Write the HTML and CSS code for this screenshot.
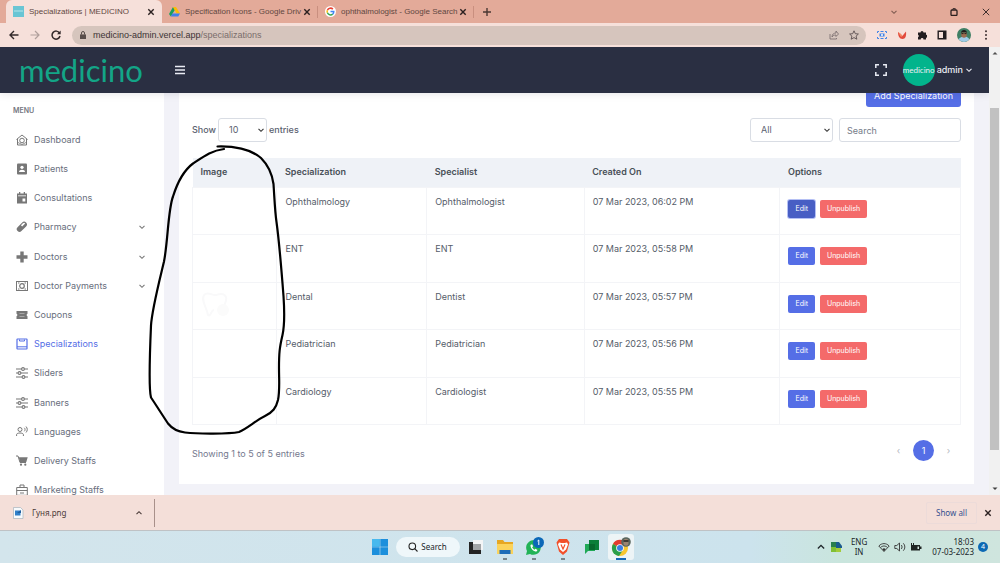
FILE: index.html
```html
<!DOCTYPE html>
<html lang="en">
<head>
<meta charset="utf-8">
<title>Specializations | MEDICINO</title>
<link rel="stylesheet" href="styles.css">
</head>
<body>
<svg class="defs" aria-hidden="true">
  <symbol id="down" viewBox="0 0 8 8"><path d="M1.5 2.8 4 5.3 6.500 2.800" fill="none" stroke="currentColor" stroke-width="1.100"/></symbol>
  <symbol id="cross" viewBox="0 0 8 8"><path d="M1.300 1.300l5.400 5.400M6.700 1.300 1.300 6.700" fill="none" stroke="currentColor" stroke-width="1.400"/></symbol>
  <symbol id="sliders" viewBox="0 0 12 12"><path d="M0 2h12M0 6h12M0 10h12" stroke="currentColor" stroke-width="1.200"/><g fill="#fff" stroke="currentColor" stroke-width="1.100"><circle cx="7" cy="2" r="1.400"/><circle cx="3.500" cy="6" r="1.400"/><circle cx="7.500" cy="10" r="1.400"/></g></symbol>
</svg>

<header class="tabs">
  <div class="tab tab-active">
    <svg class="tab-icon" viewBox="0 0 11 11"><path fill="#69c5d4" d="M0 0h11v11H0z"/><path fill="#8fd5df" d="M1 4h9v2H1z"/></svg>
    <span class="tab-title">Specializations | MEDICINO</span>
    <button class="icon-btn" aria-label="Close tab"><svg class="i8"><use href="#cross"/></svg></button>
  </div>
  <div class="tab tab-line">
    <svg class="tab-icon" viewBox="0 0 11 11"><path fill="#18a05e" d="M4 1 0 8l1.800 2.500L5.800 4z"/><path fill="#fbbc05" d="M4 1h3l4 6.500H7.500z"/><path fill="#3f80ec" d="M3.500 7.500H11l-1.700 3H1.800z"/></svg>
    <span class="tab-title">Specification Icons - Google Driv</span>
    <button class="icon-btn" aria-label="Close tab"><svg class="i8"><use href="#cross"/></svg></button>
  </div>
  <div class="tab tab-line">
    <svg class="tab-icon" viewBox="0 0 11 11"><circle cx="5.500" cy="5.500" r="5.500" fill="#fff"/><g fill="none" stroke-width="1.500"><path stroke="#ea4335" d="M2.400 4.200A3.400 3.400 0 0 1 7.900 3.100"/><path stroke="#fbbc05" d="M2.400 4.200a3.400 3.400 0 0 0 0 2.600"/><path stroke="#34a853" d="M2.400 6.800a3.400 3.400 0 0 0 5.300 1.300"/><path stroke="#4285f4" d="M5.500 5.500h3.300a3.400 3.400 0 0 1-1.100 2.600"/></g></svg>
    <span class="tab-title">ophthalmologist - Google Search</span>
    <button class="icon-btn" aria-label="Close tab"><svg class="i8"><use href="#cross"/></svg></button>
  </div>
  <button class="icon-btn new-tab" aria-label="New tab"><svg class="i8" viewBox="0 0 8 8"><path d="M4 0v8M0 4h8" stroke="#4b3833" stroke-width="1.400"/></svg></button>
  <div class="window-controls">
    <button class="icon-btn search-tabs" aria-label="Search tabs"><svg class="i8"><use href="#down"/></svg></button>
    <button class="icon-btn restore" aria-label="Restore"><svg class="i8" viewBox="0 0 8 8"><rect x="1" y="2" width="6" height="5.500" rx="1" fill="none" stroke="#2b2020" stroke-width="1.300"/><path d="M2.300 1.500C2.300.3 5.700.3 6 1.500" fill="none" stroke="#2b2020"/></svg></button>
    <button class="icon-btn" aria-label="Close"><svg class="i8" viewBox="0 0 8 8"><path d="M.8.800l6.400 6.400M7.200.8.800 7.200" stroke="#2b2020" stroke-width=".9"/></svg></button>
  </div>
</header>

<nav class="toolbar" aria-label="Browser">
  <button class="icon-btn" aria-label="Back"><svg class="i10" viewBox="0 0 10 10"><path d="M9.500 5H1M5 1 1 5l4 4" fill="none" stroke="#33292a" stroke-width="1.400"/></svg></button>
  <button class="icon-btn" aria-label="Forward"><svg class="i10" viewBox="0 0 10 10"><path d="M.5 5H9M5 1l4 4-4 4" fill="none" stroke="#b09f9b" stroke-width="1.200"/></svg></button>
  <button class="icon-btn" aria-label="Reload"><svg class="i10" viewBox="0 0 10 10"><path d="M8.500 3A4 4 0 1 0 9 6" fill="none" stroke="#33292a" stroke-width="1.500"/><path d="M9.700.5v3.800H6z" fill="#33292a"/></svg></button>
  <div class="address">
    <svg class="i8" viewBox="0 0 8 8"><path d="M1 3.400h6V8H1z" fill="#594d4a"/><path d="M2.500 3.500V2a1.500 1.500 0 0 1 3 0v1.500" fill="none" stroke="#594d4a"/></svg>
    <span class="url"><b>medicino-admin.vercel.app</b>/specializations</span>
    <svg class="i10" viewBox="0 0 10 10"><path d="M1 4v5h6.500V8M3 7c0-3 2-4 4-4V1l2.500 3L7 6.500V5C5 5 4 5.500 3 7z" fill="none" stroke="#75686a" stroke-width=".8"/></svg>
    <svg class="i10" viewBox="0 0 10 10"><path d="m5 .8 1.300 2.900 3.100.3-2.300 2.100.7 3.100L5 7.600 2.200 9.200l.7-3.100L.6 4l3.100-.3z" fill="none" stroke="#5b4f50" stroke-width=".9"/></svg>
  </div>
  <div class="extensions">
    <svg class="i10" viewBox="0 0 10 10"><path d="M.5 3V1.500H2M8 1.500h1.500V3M.5 7v1.500H2M8 8.500h1.500V7M3.500 1.500h3M3.500 8.500h3" fill="none" stroke="#3f83e8"/><path d="M2.500 3.500h5v3h-5z" fill="#3f83e8"/><circle cx="5" cy="5" r="1" fill="#fff"/></svg>
    <svg class="i10" viewBox="0 0 10 10"><path d="M1 2c0 4 1.500 7 4.500 7S9.500 6 9 1.500L6.500 4.500l-1 1.500L3.500 4z" fill="#e2493b"/><path d="M1 2l3 2 1.500 2L4 7z" fill="#f38d6a"/></svg>
    <svg class="i10" viewBox="0 0 10 10"><path d="M1 2.500h2.500a1.500 1.500 0 1 1 3 0H9V5a1.400 1.400 0 1 1 0 2.500V9.500H6.500a1.400 1.400 0 0 0-2.800 0H1V7.300a1.500 1.500 0 0 0 0-2.600z" fill="#221d20"/></svg>
    <svg class="i10" viewBox="0 0 10 10"><path d="M1.200 1.200h7.600v7.600H1.200z" fill="none" stroke="#221d20" stroke-width="1.400"/><path d="M6 1h3v8H6z" fill="#221d20"/></svg>
    <svg class="i14" viewBox="0 0 14 14"><circle cx="7" cy="7" r="7" fill="#3f7f65"/><path d="M1.500 11.300a7 7 0 0 0 11 0C11 9 9 8.500 7 8.500s-4 .8-5.500 2.800z" fill="#9fcbe8"/><path d="M4.300 4.500h5.400V7a2.700 2.700 0 0 1-5.400 0z" fill="#9c6a4f"/><path d="M4 5c0-4 6-4 6 0L9 4.300H5z" fill="#201c1c"/><path d="M4.500 5.600h2M7.500 5.600h2" stroke="#222"/></svg>
    <svg class="i10" viewBox="0 0 10 10"><g fill="#3d3032"><circle cx="5" cy="1.200" r="1"/><circle cx="5" cy="5" r="1"/><circle cx="5" cy="8.800" r="1"/></g></svg>
  </div>
</nav>

<div class="viewport">
  <div class="app">
    <header class="topbar">
      <a class="logo" href="#">medicino</a>
      <button class="icon-btn" aria-label="Toggle menu"><svg class="i10" viewBox="0 0 10 10"><path d="M0 1.500h10M0 5h10M0 8.500h10" stroke="#e9ecf4" stroke-width="1.700"/></svg></button>
      <button class="icon-btn fullscreen" aria-label="Full screen"><svg class="i12" viewBox="0 0 12 12"><path d="M.8 4V.800H4M8 .8h3.200V4M11.200 8v3.200H8M4 11.200H.8V8" fill="none" stroke="#e9ecf4" stroke-width="1.500"/></svg></button>
      <button class="account"><span class="avatar">medicino</span><span>admin</span><svg class="i8"><use href="#down"/></svg></button>
    </header>

    <div class="body">
      <aside class="sidebar">
        <h2 class="menu-title">MENU</h2>
        <ul class="menu">
          <li><a href="#"><svg class="i12" viewBox="0 0 12 12"><path d="M1.500 5v6h9V5M.5 5.500 6 1l5.500 4.500" fill="none" stroke="currentColor"/><circle cx="6" cy="6.500" r="2.300" fill="none" stroke="currentColor"/><path d="M2 8.500l4 2 4-2" fill="none" stroke="currentColor" stroke-width=".8"/></svg>Dashboard</a></li>
          <li><a href="#"><svg class="i12" viewBox="0 0 12 12"><rect x="1" y=".5" width="10" height="11" rx="1" fill="currentColor"/><circle cx="6" cy="4.300" r="1.600" fill="#fff"/><path d="M3 9c0-3 6-3 6 0z" fill="#fff"/></svg>Patients</a></li>
          <li><a href="#"><svg class="i12" viewBox="0 0 12 12"><path d="M1 1.500h10v10H1zM3 0h1.300v2H3zM7.700 0H9v2H7.700z" fill="currentColor"/><path d="M2 3.800h8" stroke="#fff" stroke-width=".8"/><path d="M6.500 6.500h2.800v3H6.500z" fill="#fff"/></svg>Consultations</a></li>
          <li><a href="#"><svg class="i12" viewBox="0 0 12 12"><g transform="rotate(-45 6 6)"><rect x="0" y="3" width="12" height="5.500" rx="2.700" fill="currentColor"/><path d="M6.500 4h2.800a1.500 1.500 0 0 1 1.500 1.700H6.500z" fill="#fff"/></g></svg>Pharmacy<svg class="i8 more"><use href="#down"/></svg></a></li>
          <li><a href="#"><svg class="i12" viewBox="0 0 12 12"><path d="M4.300.5h3.400v3.800h3.800v3.400H7.700v3.800H4.300V7.700H.5V4.300h3.800z" fill="currentColor"/></svg>Doctors<svg class="i8 more"><use href="#down"/></svg></a></li>
          <li><a href="#"><svg class="i12" viewBox="0 0 12 12"><rect x=".5" y="1.500" width="11" height="9" fill="none" stroke="currentColor"/><circle cx="6" cy="6" r="2.300" fill="none" stroke="currentColor" stroke-width="1.200"/><path d="M2 3h1.500M8.500 3H10M2 9h1.500M8.500 9H10" stroke="currentColor"/></svg>Doctor Payments<svg class="i8 more"><use href="#down"/></svg></a></li>
          <li><a href="#"><svg class="i12" viewBox="0 0 12 12"><path d="M.5 2h11v2.700a1.400 1.400 0 0 0 0 2.600V10H.5V7.300a1.400 1.400 0 0 0 0-2.600z" fill="currentColor"/><path d="M3.500 4.500h5M3.500 7.500h5" stroke="#bbb" stroke-width=".7"/></svg>Coupons</a></li>
          <li><a class="current" href="#"><svg class="i12" viewBox="0 0 12 12"><rect x="1" y="1" width="10" height="10" rx=".5" fill="none" stroke="currentColor" stroke-width="1.200"/><path d="M3.500 1.500v1.500h5V1.500M1 8.800h10" fill="none" stroke="currentColor"/></svg>Specializations</a></li>
          <li><a href="#"><svg class="i12"><use href="#sliders"/></svg>Sliders</a></li>
          <li><a href="#"><svg class="i12"><use href="#sliders"/></svg>Banners</a></li>
          <li><a href="#"><svg class="i12" viewBox="0 0 12 12"><g fill="none" stroke="currentColor"><circle cx="4" cy="3.500" r="2"/><path d="M.6 10V8.500C.6 6.500 7.400 6.500 7.400 8.500V10M8.300 1.800c1 1 1 2.500 0 3.500M10 .5c1.700 1.800 1.700 4.300 0 6"/></g></svg>Languages</a></li>
          <li><a href="#"><svg class="i12" viewBox="0 0 12 12"><path d="M0 1h2l2 6.500h6" fill="none" stroke="currentColor"/><path d="M2.700 2.300h9L10.300 7H4z" fill="currentColor"/><circle cx="5" cy="9.700" r="1.100" fill="currentColor"/><circle cx="9.300" cy="9.700" r="1.100" fill="currentColor"/></svg>Delivery Staffs</a></li>
          <li><a href="#"><svg class="i12" viewBox="0 0 12 12"><path d="M.7 3.500h10.600v7.800H.7zM4 3.500V1h4v2.500M.7 6.500h10.600M4 9h4" fill="none" stroke="currentColor"/></svg>Marketing Staffs</a></li>
        </ul>
      </aside>

      <main class="content">
        <section class="card">
          <button class="add">Add Specialization</button>
          <div class="filters">
            <label class="length">Show
              <span class="select"><select class="field count"><option>10</option></select><svg class="i8"><use href="#down"/></svg></span>
              entries</label>
            <span class="select push"><select class="field kind" aria-label="Status"><option>All</option></select><svg class="i8"><use href="#down"/></svg></span>
            <input class="field search" type="search" placeholder="Search" aria-label="Search">
          </div>
          <table class="grid">
            <colgroup><col class="c-image"><col class="c-name"><col class="c-person"><col class="c-date"><col class="c-options"></colgroup>
            <thead><tr><th>Image</th><th>Specialization</th><th>Specialist</th><th>Created On</th><th>Options</th></tr></thead>
            <tbody>
              <tr><td></td><td>Ophthalmology</td><td>Ophthalmologist</td><td>07 Mar 2023, 06:02 PM</td><td><div class="actions"><button class="btn focused">Edit</button><button class="btn danger">Unpublish</button></div></td></tr>
              <tr><td></td><td>ENT</td><td>ENT</td><td>07 Mar 2023, 05:58 PM</td><td><div class="actions"><button class="btn">Edit</button><button class="btn danger">Unpublish</button></div></td></tr>
              <tr><td><svg class="tooth" viewBox="0 0 30 26"><path d="M3 3c4-4 9 1 12 0s8-3 10 2c1 4-1 6-2 9M3 3c-3 6 2 11 4 20 3 2 3-5 6-5" fill="none" stroke="#f9f9fa" stroke-width="2"/><circle cx="22" cy="18" r="6" fill="#fbfbfb"/></svg></td><td>Dental</td><td>Dentist</td><td>07 Mar 2023, 05:57 PM</td><td><div class="actions"><button class="btn">Edit</button><button class="btn danger">Unpublish</button></div></td></tr>
              <tr><td></td><td>Pediatrician</td><td>Pediatrician</td><td>07 Mar 2023, 05:56 PM</td><td><div class="actions"><button class="btn">Edit</button><button class="btn danger">Unpublish</button></div></td></tr>
              <tr><td></td><td>Cardiology</td><td>Cardiologist</td><td>07 Mar 2023, 05:55 PM</td><td><div class="actions"><button class="btn">Edit</button><button class="btn danger">Unpublish</button></div></td></tr>
            </tbody>
          </table>
          <footer class="pager">
            <span class="summary">Showing 1 to 5 of 5 entries</span>
            <div class="pages"><button class="page" aria-label="Previous">‹</button><button class="page page-current">1</button><button class="page" aria-label="Next">›</button></div>
          </footer>
        </section>
      </main>
    </div>
  </div>
  <div class="scrollbar" aria-hidden="true">
    <svg class="i8" viewBox="0 0 8 8"><path d="M1.500 5.500h5L4 3z" fill="#505050"/></svg>
    <div class="track"><div class="thumb"></div></div>
    <svg class="i8" viewBox="0 0 8 8"><path d="M1.500 2.500h5L4 5z" fill="#404040"/></svg>
  </div>
</div>

<div class="downloads">
  <button class="download">
    <svg class="i12" viewBox="0 0 12 12"><path d="M1.500.5h7l2.500 2.500v8.500H1.500z" fill="#f7fafc" stroke="#a8b4bd" stroke-width=".7"/><path d="M3 3.500h5.500v5H3z" fill="#2f7fc9"/><path d="M5 6l4-3v3z" fill="#205f9e"/></svg>
    <span>Гуня.png</span>
    <svg class="i8 more flip"><use href="#down"/></svg>
  </button>
  <button class="show-all">Show all</button>
  <button class="icon-btn" aria-label="Close downloads"><svg class="i8"><use href="#cross"/></svg></button>
</div>

<footer class="taskbar">
  <div class="dock">
    <button class="app-btn" aria-label="Start"><svg class="i16" viewBox="0 0 16 16"><path d="M0 0h7.700v7.700H0zM8.300 0H16v7.700H8.300zM0 8.300h7.700V16H0zM8.300 8.300H16V16H8.300z" fill="#1c8fdc"/><path d="M0 0h7.700v7.700H0z" fill="#48b9ee"/></svg></button>
    <button class="task-search"><svg class="i10" viewBox="0 0 10 10"><circle cx="4.300" cy="4.300" r="3.300" fill="none" stroke="#222" stroke-width="1.100"/><path d="m6.700 6.700 2.800 2.800" stroke="#222" stroke-width="1.100"/></svg>Search</button>
    <button class="app-btn" aria-label="Task view"><svg class="i16" viewBox="0 0 16 16"><path d="M5 1h10v10H5z" fill="#f3f5f6"/><path d="M1 3h4v8h8v4H1z" fill="#242424"/><path d="M5 5h8v6H5z" fill="#a2a5a7"/></svg></button>
    <button class="app-btn running" aria-label="Files"><svg class="i16" viewBox="0 0 16 16"><path d="M0 1h6l1.500 2H16v12H0z" fill="#e6a723"/><path d="M0 5h16v10H0z" fill="#fbd35b"/><path d="M2.500 11h11v4h-11z" fill="#1d6cb8"/></svg></button>
    <button class="app-btn running" aria-label="WhatsApp"><svg class="i20" viewBox="0 0 20 20"><path d="M2 18l1-4a7.300 7.300 0 1 1 3 3z" fill="#22b357"/><path d="M6.500 8c0 4 3 6.500 6 6.500l1-1.500-2-1.200-1 .9C9.500 12.200 8.500 11 8.200 10.200l.9-.9-1-2z" fill="#fff"/><circle cx="14.500" cy="5.500" r="5.500" fill="#0b68b8"/><path d="M13.500 4l1.300-1v5" fill="none" stroke="#fff"/></svg></button>
    <button class="app-btn running" aria-label="Brave"><svg class="i16" viewBox="0 0 16 16"><path d="M4 0h8l1.500 2 1 1.500-.7 2.500L12 12.500 8 16l-4-3.500L2.200 6l-.7-2.500 1-1.500z" fill="#f2502a"/><path d="M4 3.500l2.500.5h3l2.500-.5 1 2-2 5L8 13l-3-2.500-2-5z" fill="#fff"/><path d="M6 5.500 8 10l2-4.500" fill="none" stroke="#f2502a" stroke-width="1.200"/></svg></button>
    <button class="app-btn" aria-label="Chat"><svg class="i16" viewBox="0 0 16 16"><path d="M5 1h10v10H5z" fill="#0b7f39"/><path d="M1 5h10v7H4l-3 3z" fill="#20a957"/><path d="M5 5h6v6H5z" fill="#07692d"/></svg></button>
    <button class="app-btn active" aria-label="Chrome"><svg class="i20" viewBox="0 0 20 20"><circle cx="9" cy="11" r="8" fill="#f8c62f"/><path d="M9 11 2 7A8 8 0 0 1 16 7z" fill="#e23c30"/><path d="M9 11 2 7a8 8 0 0 0 6 12l4-6z" fill="#2b9f4b"/><circle cx="9" cy="11" r="3.800" fill="#fff"/><circle cx="9" cy="11" r="3" fill="#3a7fe3"/><circle cx="15" cy="5" r="4.800" fill="#59665f"/><path d="M12.500 4c0-3 5-3 5 0v2.500c0 3-5 3-5 0z" fill="#9b8470"/><path d="M12.500 4h5" stroke="#222" stroke-width="1.500"/></svg></button>
  </div>
  <div class="tray">
    <svg class="i10 flip" viewBox="0 0 8 8"><use href="#down"/></svg>
    <svg class="i12" viewBox="0 0 12 12"><path d="M1 1h5v5H1z" fill="#2a7f4f"/><path d="M6 1h3l3 4v2H6z" fill="#1b5c8e"/><path d="M1 6h5v5H1z" fill="#80bf36"/><path d="M6 7h5v4H6z" fill="#a3cc3a"/></svg>
    <span class="lang">ENG<br>IN</span>
    <svg class="i12" viewBox="0 0 12 12"><path d="M.8 5C4 1.800 8 1.800 11.200 5L6 10.500zM2.500 6.500c2-2 5-2 7 0" fill="none" stroke="#333" stroke-width=".9"/><path d="M4.300 8c1-1 2.400-1 3.400 0L6 10.500z" fill="#333"/></svg>
    <svg class="i12" viewBox="0 0 12 12"><path d="M.8 4.500h2L5.500 2v8L2.800 7.500h-2zM7.300 4c1 1.200 1 2.800 0 4M9.300 2.300c2 2.200 2 5.200 0 7.400" fill="none" stroke="#333" stroke-width=".9"/></svg>
    <svg class="i12" viewBox="0 0 12 12"><path d="M1 4h9v5.500H1zM10 5.500h1.500v2.500H10z" fill="#1f2523"/><path d="M1.500 2v3M3.500 2v3" stroke="#1f2523"/><path d="M7.500 5.500h1.500v2.500H7.500z" fill="#d5e8df"/></svg>
    <span class="clock">18:03<br>07-03-2023</span>
    <span class="notice">4</span>
  </div>
</footer>

<svg class="scribble" viewBox="0 0 1000 563" aria-hidden="true"><path d="M217.500 146.500C233 146 251 149 261 158c6 6 11 15 12.500 26 1 15 1.500 28 3 38 3 22 5 48 7 74 1 15 1 30-1 39-3 13-3.500 18-3.500 33 0 13 1 22-1 32-2 8-5 12-13 16-10 5-17 12-26 16-10 2-41 2-54 .5-8-1-13-4-17-9-6-9-11-17-17-26-2.500-9-1-49 0-72 1-16 8-43 13-64 4-20 4-52 9-65 5-16 12-27 20-33 12-8 19-13 31-14.500" fill="none" stroke="#000" stroke-width="2.200" stroke-linecap="round" stroke-linejoin="round"/></svg>
</body>
</html>
```
FILE: styles.css
```css
* { box-sizing: border-box; }

body {
  margin: 0;
  height: 100vh;
  display: flex;
  flex-direction: column;
  overflow: hidden;
  position: relative;
  font: 9px/14px Inter, "Open Sans", sans-serif;
  color: #5b6270;
}

button, input, select { font: inherit; color: inherit; }
button { border: 0; padding: 0; background: none; }
a { color: inherit; text-decoration: none; }
svg { flex: none; display: block; }

.defs { position: absolute; width: 0; height: 0; }
.i8 { width: 8px; height: 8px; }
.i10 { width: 10px; height: 10px; }
.i12 { width: 12px; height: 12px; }
.i14 { width: 14px; height: 14px; }
.i16 { width: 16px; height: 16px; }
.i20 { width: 20px; height: 20px; }
.icon-btn { display: grid; place-items: center; flex: none; color: #2b2020; }
.flip { transform: rotate(180deg); }
.more { margin-left: auto; }

/* Browser tabs */
.tabs {
  flex: none;
  height: 23px;
  display: flex;
  align-items: center;
  padding: 0 10px 0 6px;
  background: #e3aa99;
  font: 8px/12px "Liberation Sans", Arial, sans-serif;
  color: #5f4741;
}
.tab { width: 156px; height: 23px; padding: 0 7px; display: flex; align-items: center; gap: 5px; }
.tab-active { background: #f6e0da; border-radius: 6px 6px 0 0; }
.tab-line { background: linear-gradient(#c98f7f, #c98f7f) right center / 1px 12px no-repeat; }
.tab-icon { width: 11px; height: 11px; }
.tab-title { flex: 1; min-width: 0; white-space: nowrap; }
.new-tab { margin-left: 9px; }
.window-controls { margin-left: auto; display: flex; align-items: center; gap: 24px; height: 20px; }
.search-tabs { color: #7d5a50; }
.restore { margin: 0 0 0 28px; }

/* Address row */
.toolbar {
  flex: none;
  height: 24px;
  display: flex;
  align-items: center;
  gap: 11px;
  padding: 0 9px;
  background: #f6e0da;
}
.address {
  flex: 1;
  height: 19px;
  display: flex;
  align-items: center;
  gap: 10px;
  padding: 0 7px;
  border-radius: 10px;
  background: #d6c5bd;
  font: 9px/14px "Liberation Sans", Arial, sans-serif;
  color: #7a6d6b;
}
.address .i8 + .url { margin-left: -4px; }
.url { flex: 1; }
.url b { font-weight: 400; color: #3d3335; }
.extensions { display: flex; align-items: center; gap: 10px; }

/* Page */
.viewport { flex: 1; min-height: 0; display: flex; }
.app { flex: 1; min-width: 0; display: flex; flex-direction: column; overflow: hidden; background: #f2f2f8; }
.topbar {
  position: relative;
  z-index: 1;
  flex: none;
  height: 46px;
  display: flex;
  align-items: center;
  padding: 0 16px 0 19px;
  background: #2a2f42;
  color: #eceef5;
  box-shadow: 0 1px 8px rgba(40, 45, 65, .12);
}
.logo { width: 156px; font: 400 31px/40px Lato, sans-serif; color: #13a587; }
.fullscreen { margin-left: auto; margin-right: 16px; }
.account { display: flex; align-items: center; gap: 2px; font-size: 9px; font-weight: 500; }
.avatar {
  width: 32px;
  height: 32px;
  border-radius: 50%;
  background: #02b48c;
  font: 8px/32px Lato, sans-serif;
  text-align: center;
}

.body { flex: 1; min-height: 0; display: flex; }
.sidebar { width: 164px; flex: none; background: #fff; padding: 11px 18px 0 13px; }
.menu-title { margin: 0 0 7px; font-size: 7px; line-height: 14px; font-weight: 600; color: #74777f; }
.menu { list-style: none; margin: 0; padding: 0 0 0 3px; height: 380px; display: grid; grid-auto-rows: 1fr; }
.menu a { height: 100%; display: flex; align-items: center; gap: 6px; color: #686e7c; }
.menu svg { color: #777; }
.menu .current, .menu .current svg { color: #556ee6; }

.content { flex: 1; min-width: 0; padding: 0 15px; }
.card { margin-top: -8px; padding: 0 13px 23px; background: #fff; }
.add {
  display: block;
  margin-left: auto;
  padding: 4px 8px;
  border-radius: 3px;
  background: #556ee6;
  color: #fff;
  line-height: 14px;
}
.filters { display: flex; align-items: center; gap: 6px; margin: 11px 0 16px; }
.length { display: flex; align-items: center; gap: 2px; font-weight: 500; }
.select { display: grid; align-items: center; }
.select > * { grid-area: 1 / 1; }
.select svg { justify-self: end; margin-right: 2px; pointer-events: none; color: #333; }
.push { margin-left: auto; }
.field {
  appearance: none;
  height: 24px;
  padding: 0 10px;
  border: 1px solid #d9dde4;
  border-radius: 3px;
  background: #fff;
  font-weight: 400;
}
.count { width: 49px; }
.kind { width: 83px; }
.search { width: 122px; padding: 0 7px; }
.search::placeholder { color: #747b88; opacity: 1; }

.grid { width: 100%; height: 267px; table-layout: fixed; border-collapse: collapse; }
.c-image { width: 11%; }
.c-name { width: 19.5%; }
.c-person { width: 20.5%; }
.c-date { width: 25.5%; }
.grid th { height: 29px; padding: 0 8px; text-align: left; font-weight: 600; color: #495057; background: #eff2f7; }
.grid td { height: 47px; padding: 7px 8px 0; vertical-align: top; border: 1px solid #f3f4f7; color: #555c69; }
.tooth { width: 30px; height: 26px; margin-top: 2px; }
.actions { display: flex; gap: 5px; padding-top: 5px; }
.btn { padding: 2px 7px; border-radius: 2px; background: #556ee6; color: #fff; font-size: 7px; line-height: 14px; }
.focused { background: #485ec4; box-shadow: 0 0 0 1px #b5c0f4; }
.danger { background: #f46a6a; }

.pager { display: flex; align-items: center; justify-content: space-between; margin-top: 15px; color: #74788d; }
.summary { padding-top: 6px; }
.pages { display: flex; gap: 4px; padding-right: 2px; }
.page { width: 21px; height: 21px; border-radius: 50%; color: #b3b7c0; }
.page-current { background: #556ee6; color: #fff; }

.scrollbar { width: 11px; flex: none; display: flex; flex-direction: column; align-items: center; padding: 2px 0; background: #f1f1f1; }
.track { flex: 1; align-self: stretch; padding: 0 1px; }
.thumb { height: 80%; margin-top: 51px; background: #c1c1c1; }

/* Download shelf */
.downloads {
  flex: none;
  height: 36px;
  display: flex;
  align-items: center;
  gap: 7px;
  padding: 0 8px 0 0;
  background: #f4dfd9;
  border-bottom: 1px solid #bfc2c5;
  font: 8px/14px "Noto Sans", sans-serif;
}
.download { width: 155px; height: 28px; padding: 0 11px 0 12px; display: flex; align-items: center; gap: 8px; border-right: 1px solid #a8908a; color: #4a3a38; }
.show-all { margin-left: auto; padding: 3px 9px; border: 1px solid #ecdbd9; border-radius: 2px; color: #35508f; }

/* Taskbar */
.taskbar {
  flex: none;
  height: 32px;
  display: grid;
  grid-template-columns: 1fr auto 1fr;
  align-items: center;
  padding: 0 12px;
  background: linear-gradient(90deg, #d3e5ec 0%, #cce3ed 75%, #c9e5dd 84%, #cfe5de 100%);
  font: 8px/10px "Noto Sans", sans-serif;
  color: #20262a;
}
.dock { grid-column: 2; display: flex; align-items: center; gap: 3px; }
.app-btn { width: 26px; height: 26px; display: grid; place-items: center; border-radius: 3px; }
.running { background: linear-gradient(#79858b, #79858b) center bottom / 4px 2px no-repeat; }
.active { background: linear-gradient(#1769b5, #1769b5) center bottom / 10px 2px no-repeat, #edf4f6; }
.task-search { height: 20px; width: 64px; display: flex; align-items: center; justify-content: center; gap: 3px; border-radius: 10px; background: #eff7fa; }
.tray { justify-self: end; display: flex; align-items: center; gap: 4px; }
.lang { text-align: center; margin: 0 7px 0 5px; }
.clock { text-align: right; margin-left: 6px; }
.notice { width: 10px; height: 10px; border-radius: 50%; background: #0c69b4; color: #fff; text-align: center; font-size: 7px; }

.scribble { position: absolute; top: 0; left: 0; width: 1000px; height: 563px; pointer-events: none; z-index: 2; }
```
